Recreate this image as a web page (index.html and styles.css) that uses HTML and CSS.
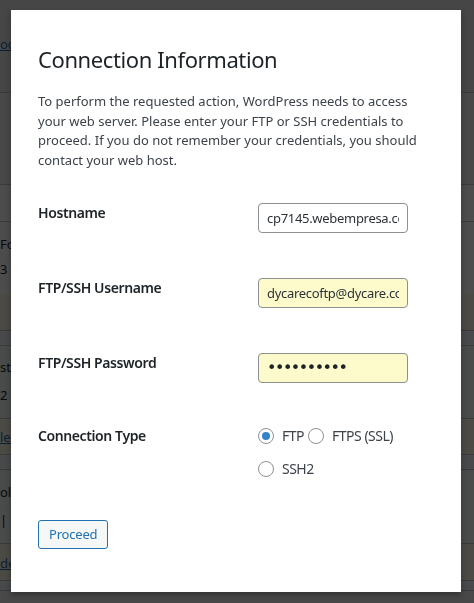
FILE: index.html
```html
<!DOCTYPE html>
<html lang="en">
<head>
<meta charset="utf-8">
<title>Connection Information</title>
<link rel="stylesheet" href="styles.css">
</head>
<body>
<div class="wp-page">
  <div class="row r-top"><a class="frag link" href="#">ocs</a></div>
  <div class="row r-gray"></div>
  <div class="row r-white r-short"></div>
  <div class="row r-white r-plugin">
    <span class="frag">For</span>
    <span class="frag">3</span>
  </div>
  <div class="row r-update r-upd-a"></div>
  <div class="row r-blue r-thin"></div>
  <div class="row r-light r-plugin2">
    <span class="frag">st</span>
    <span class="frag">2</span>
  </div>
  <div class="row r-update r-upd-b"><a class="frag link" href="#">let</a></div>
  <div class="row r-blue r-thin"></div>
  <div class="row r-light r-plugin3">
    <span class="frag">ol</span>
    <span class="frag">| E</span>
  </div>
  <div class="row r-update r-upd-c"><a class="frag link" href="#">de</a></div>
  <div class="row r-blue r-thin2"></div>
  <div class="row r-foot"></div>
</div>
<div class="overlay"></div>
<div class="dialog" role="dialog">
  <h1 class="title">Connection Information</h1>
  <p class="intro">To perform the requested action, WordPress needs to access<br>your web server. Please enter your FTP or SSH credentials to<br>proceed. If you do not remember your credentials, you should<br>contact your web host.</p>
  <div class="form">
    <label class="lbl" for="hostname">Hostname</label>
    <div class="field"><input id="hostname" class="input" type="text" value="cp7145.webempresa.com"></div>
    <label class="lbl" for="username">FTP/SSH Username</label>
    <div class="field"><input id="username" class="input autofill" type="text" value="dycarecoftp@dycare.com"></div>
    <label class="lbl" for="password">FTP/SSH Password</label>
    <div class="field"><input id="password" class="input autofill pw" type="password" value="dycarepass"></div>
    <div class="lbl lbl-ct">Connection Type</div>
    <div class="radios">
      <div class="radio-line">
        <label class="radio"><input type="radio" name="ctype" checked><span>FTP</span></label>
        <label class="radio"><input type="radio" name="ctype"><span>FTPS (SSL)</span></label>
      </div>
      <div class="radio-line">
        <label class="radio"><input type="radio" name="ctype"><span>SSH2</span></label>
      </div>
    </div>
  </div>
  <button class="btn" type="button">Proceed</button>
</div>
</body>
</html>
```
FILE: styles.css
```css
html, body {
  margin: 0;
  padding: 0;
}
body {
  background: #f0f0f1;
  font-family: "Noto Sans", "Open Sans", sans-serif;
  color: #3c434a;
  overflow: hidden;
  height: 603px;
}
.wp-page {
  display: flex;
  flex-direction: column;
}
.row {
  border-bottom: 1px solid #c3c4c7;
  display: flex;
  flex-direction: column;
  font-size: 13px;
  line-height: 20px;
  box-sizing: border-box;
}
.r-top { height: 93px; background: #ececed; padding-top: 34px; }
.r-gray { height: 92px; background: #f0f0f1; }
.r-white { background: #fff; }
.r-short { height: 37px; }
.r-plugin { height: 72px; border-bottom: none; padding-top: 12px; gap: 5px; }
.r-update { background: #fcf9e8; }
.r-upd-a { height: 37px; }
.r-blue { background: #f0f6fc; }
.r-thin { height: 15px; }
.r-thin2 { height: 10px; }
.r-light { background: #f6f7f7; }
.r-plugin2 { height: 73px; padding-top: 11px; gap: 8px; }
.r-upd-b { height: 36px; padding-top: 8px; }
.r-plugin3 { height: 74px; padding-top: 12px; gap: 8px; }
.r-upd-c { height: 37px; padding-top: 9px; }
.r-foot { flex: 1; height: 20px; background: #dcdcde; border-bottom: none; }
.frag {
  color: #1d2327;
  font-size: 13px;
  white-space: nowrap;
}
.link {
  color: #2271b1;
  text-decoration: underline;
}
.overlay {
  position: fixed;
  inset: 0;
  background: rgba(0, 0, 0, 0.7);
}
.dialog {
  position: absolute;
  left: 11px;
  top: 10px;
  width: 450px;
  height: 582px;
  box-sizing: border-box;
  background: #fff;
  box-shadow: 0 3px 6px rgba(0, 0, 0, 0.3);
  padding: 34px 27px 0;
}
.title {
  margin: 0;
  font-size: 22px;
  font-weight: 400;
  line-height: 30px;
  letter-spacing: -0.4px;
  color: #1d2327;
}
.intro {
  margin: 18px 0 0;
  font-size: 13px;
  line-height: 19.7px;
  color: #3c434a;
  white-space: nowrap;
}
.form {
  margin-top: 32px;
  display: grid;
  grid-template-columns: 220px 1fr;
  row-gap: 45px;
}
.lbl {
  font-size: 14px;
  font-weight: 600;
  line-height: 18px;
  letter-spacing: -0.4px;
  color: #1d2327;
  padding-top: 1px;
}
.lbl-ct {
  padding-top: 0;
  margin-top: -1px;
}
.input {
  box-sizing: border-box;
  width: 150px;
  height: 30px;
  margin: 0;
  padding: 0 8px;
  border: 1px solid #8c8f94;
  border-radius: 4px;
  background: #fff;
  color: #2c3338;
  font-family: "Noto Sans", "Open Sans", sans-serif;
  font-size: 13px;
  letter-spacing: -0.3px;
  outline: none;
}
.autofill {
  background: #fdfbcb;
}
.pw {
  font-family: "DejaVu Sans", sans-serif;
  font-size: 16px;
  letter-spacing: -1.5px;
  color: #1d2327;
}
.radios {
  display: flex;
  flex-direction: column;
  gap: 17px;
}
.radio-line {
  display: flex;
  gap: 4px;
}
.radio {
  display: inline-flex;
  align-items: center;
  gap: 8px;
  font-size: 14px;
  line-height: 16px;
  letter-spacing: -0.5px;
  color: #3c434a;
}
.radio input {
  appearance: none;
  -webkit-appearance: none;
  box-sizing: border-box;
  width: 16px;
  height: 16px;
  margin: 0;
  border: 1px solid #8c8f94;
  border-radius: 50%;
  background: #fff;
  display: inline-flex;
  align-items: center;
  justify-content: center;
}
.radio input:checked::before {
  content: "";
  width: 8px;
  height: 8px;
  border-radius: 50%;
  background: #3582c4;
}
.btn {
  margin-top: 43px;
  box-sizing: border-box;
  height: 29px;
  padding: 0 10px;
  border: 1px solid #2271b1;
  border-radius: 3px;
  background: #f6f7f7;
  color: #2271b1;
  font-family: "Noto Sans", "Open Sans", sans-serif;
  font-size: 13px;
  letter-spacing: -0.2px;
  cursor: pointer;
}
```
